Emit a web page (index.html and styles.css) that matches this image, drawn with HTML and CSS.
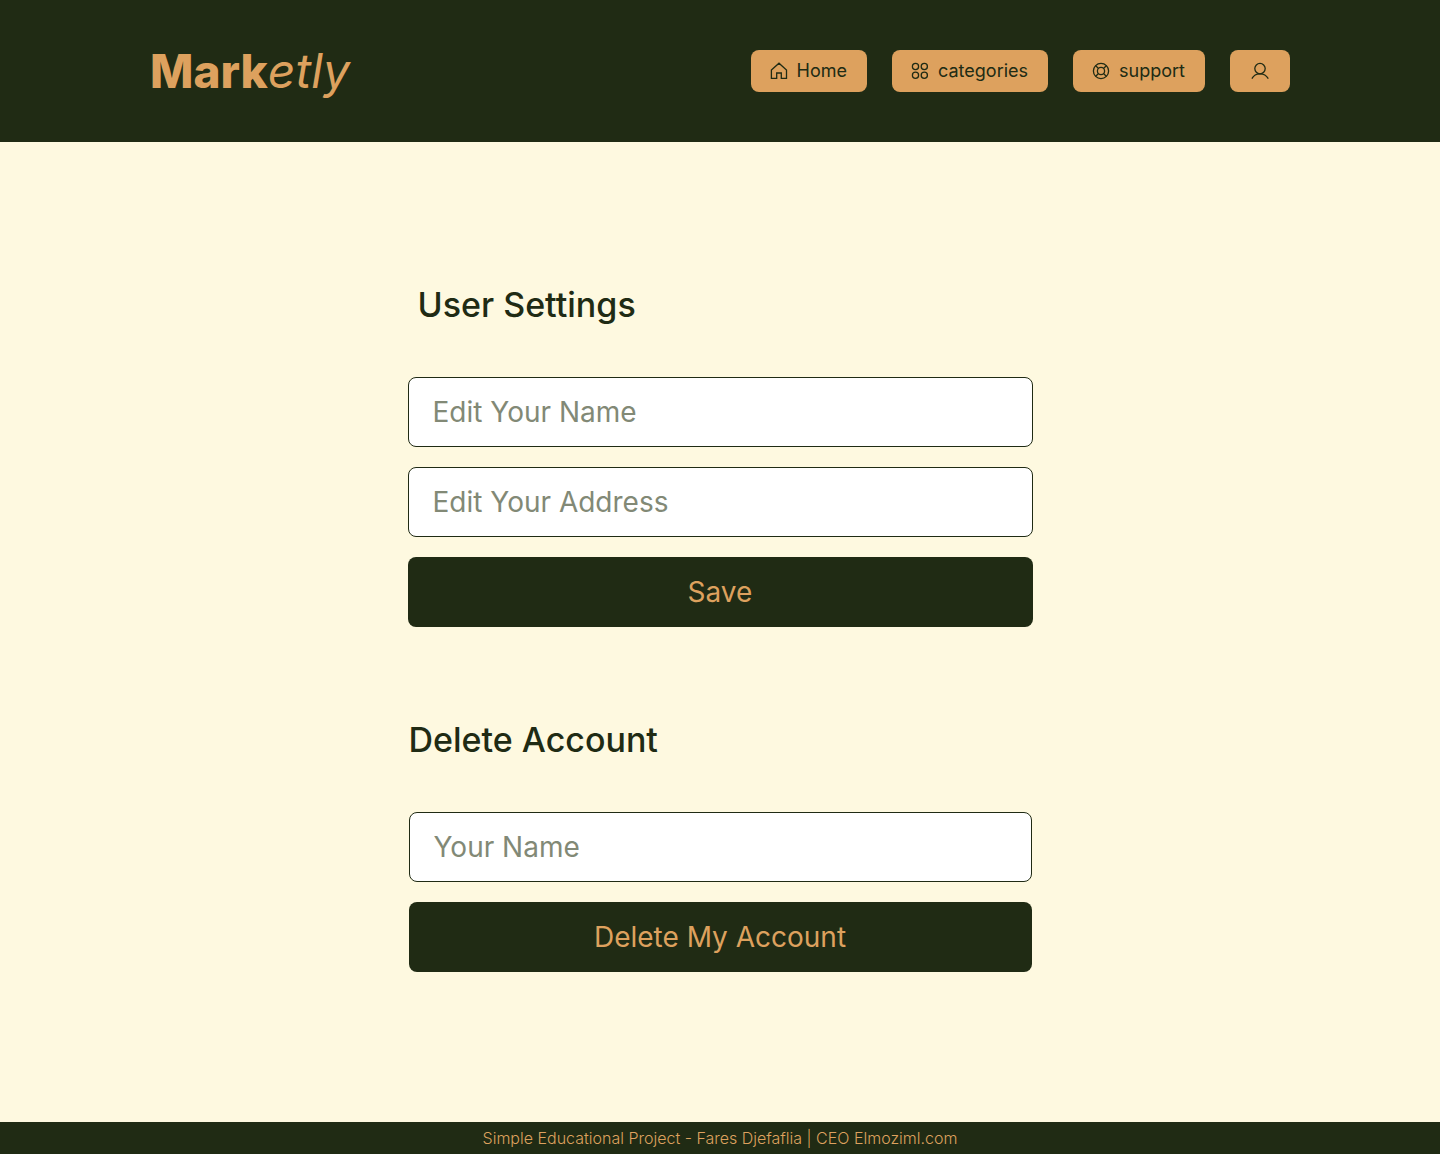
FILE: index.html
```html
<!DOCTYPE html>
<html lang="en">
<head>
<meta charset="utf-8">
<meta name="viewport" content="width=device-width, initial-scale=1">
<title>Marketly - User Settings</title>
<link rel="stylesheet" href="styles.css">
</head>
<body>
<header class="site-header">
  <a class="logo" href="#">Mark<em>etly</em></a>
  <nav class="nav">
    <a class="nav-link" href="#">
      <svg class="icon" viewBox="0 0 16 16" aria-hidden="true"><path d="M.4 7 8 .2 15.500 7v8.400H10.300V10H5.700v5.400H.4z"/></svg>
      Home
    </a>
    <a class="nav-link" href="#">
      <svg class="icon" viewBox="0 0 16 16" aria-hidden="true"><circle cx="3.500" cy="3.500" r="3.100"/><circle cx="12.300" cy="3.500" r="3.100"/><circle cx="3.500" cy="12.300" r="3.100"/><circle cx="12.300" cy="12.300" r="3.100"/></svg>
      categories
    </a>
    <a class="nav-link" href="#">
      <svg class="icon" viewBox="0 0 16 16" aria-hidden="true"><circle cx="8" cy="8" r="7.600"/><circle cx="8" cy="8" r="3.600"/><path d="m2.700 2.700 2.800 2.800m5 5 2.800 2.800m0-10.600-2.800 2.800m-5 5-2.800 2.800"/></svg>
      support
    </a>
    <a class="nav-link" href="#" aria-label="Account">
      <svg class="icon icon-user" viewBox="0 0 20 16" aria-hidden="true"><circle cx="10" cy="5.600" r="5.200"/><path d="M1.900 15.600C3.500 12.500 6.500 10.800 10 10.800s6.500 1.700 8.300 4.800"/></svg>
    </a>
  </nav>
</header>
<main class="content">
  <form class="panel panel-settings">
    <h1 class="title">User Settings</h1>
    <input class="field" type="text" placeholder="Edit Your Name" aria-label="Edit Your Name">
    <input class="field" type="text" placeholder="Edit Your Address" aria-label="Edit Your Address">
    <button class="submit" type="button">Save</button>
  </form>
  <form class="panel panel-delete">
    <h2 class="title">Delete Account</h2>
    <input class="field" type="text" placeholder="Your Name" aria-label="Your Name">
    <button class="submit" type="button">Delete My Account</button>
  </form>
</main>
<footer class="site-footer">Simple Educational Project - Fares Djefaflia | CEO Elmoziml.com</footer>
</body>
</html>
```
FILE: styles.css
```css
:root {
  --dark: #202b14;
  --accent: #dda15e;
  --cream: #fef9e0;
  --muted: #828976;
}

* {
  box-sizing: border-box;
}

body {
  display: flex;
  flex-direction: column;
  min-height: 100vh;
  margin: 0;
  background: var(--cream);
  color: var(--dark);
  font-family: Inter, sans-serif;
}

.site-header {
  display: flex;
  align-items: center;
  justify-content: space-between;
  padding: 50px 150px;
  background: var(--dark);
}

.logo {
  color: var(--accent);
  font-size: 46px;
  font-weight: 800;
  line-height: 42px;
  text-decoration: none;
}

.logo em {
  font-size: 48px;
  font-weight: 400;
}

.nav {
  display: flex;
  gap: 25px;
}

.nav-link {
  display: flex;
  align-items: center;
  gap: 10px;
  min-height: 42px;
  padding: 10px 20px;
  border-radius: 8px;
  background: var(--accent);
  color: var(--dark);
  font-size: 18px;
  line-height: 22px;
  text-decoration: none;
}

.icon {
  width: 16px;
  height: 16px;
  overflow: visible;
  fill: none;
  stroke: currentColor;
  stroke-width: 1.3;
}

.icon-user {
  width: 20px;
}

.content {
  display: flex;
  flex: 1;
  flex-direction: column;
  align-items: center;
  gap: 100px;
  padding: 150px 24px;
}

.panel {
  display: flex;
  flex-direction: column;
  gap: 20px;
  width: 100%;
}

.panel-settings {
  max-width: 625px;
}

.panel-delete {
  max-width: 623px;
}

.title {
  margin: 0 0 39px;
  font-size: 34px;
  font-weight: 500;
  line-height: 26px;
}

.panel-settings .title {
  padding-left: 10px;
}

.field,
.submit {
  width: 100%;
  height: 70px;
  border-radius: 8px;
  font: inherit;
  font-size: 28px;
}

.field {
  padding: 0 24px;
  border: 1px solid var(--dark);
  background: #fff;
  color: var(--dark);
}

.field::placeholder {
  color: var(--muted);
  opacity: 1;
}

.submit {
  border: 0;
  background: var(--dark);
  color: var(--accent);
}

.site-footer {
  padding: 6px 24px;
  background: var(--dark);
  color: var(--accent);
  font-size: 16px;
  font-weight: 300;
  line-height: 20px;
  text-align: center;
}
```
